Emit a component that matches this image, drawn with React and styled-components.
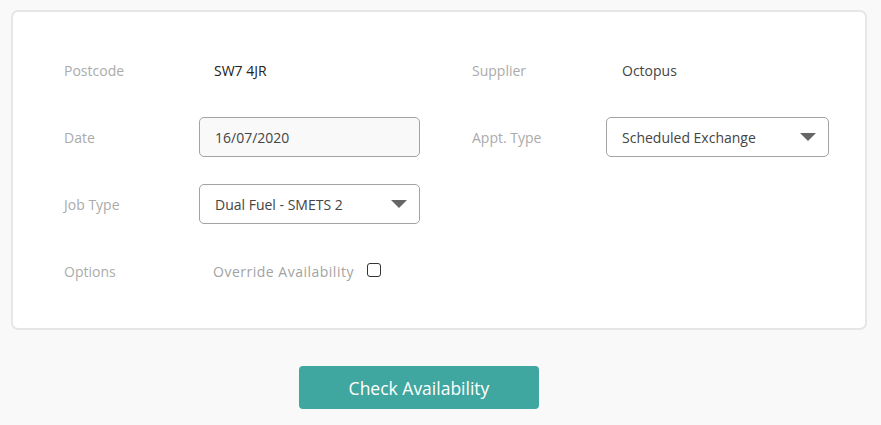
import React, { useState } from "react";
import styled, { createGlobalStyle } from "styled-components";

const GlobalStyle = createGlobalStyle`
  body {
    margin: 0;
    background: #f9f9f9;
    font-family: "Open Sans", "Liberation Sans", sans-serif;
  }
`;

const Page = styled.div`
  padding: 10px 14px 0 11px;
  display: flex;
  flex-direction: column;
  align-items: stretch;
`;

const Card = styled.div`
  background: #fff;
  border: 2px solid #e6e6e6;
  border-radius: 7px;
  padding: 38px 36px 37px 51px;
`;

const FormGrid = styled.div`
  display: grid;
  grid-template-columns: 135px 221px 52px 134px 223px;
  grid-auto-rows: 40px;
  row-gap: 27px;
  align-items: center;
`;

const Label = styled.div`
  font-size: 14px;
  color: #ababab;
  grid-column: ${props => props.col || "auto"};
`;

const Value = styled.div`
  font-size: 14px;
  color: ${props => props.dark ? "#222" : "#444"};
  padding-left: ${props => props.indent || 0}px;
`;

const Field = styled.div`
  height: 40px;
  box-sizing: border-box;
  border: 1px solid #a3a3a3;
  border-radius: 5px;
  background: ${props => props.muted ? "#f9f9f9" : "#fff"};
  display: flex;
  align-items: center;
  justify-content: space-between;
  padding: 0 12px 0 15px;
  font-size: 14px;
  color: #444;
`;

const Caret = styled.span`
  width: 0;
  height: 0;
  border-left: 8px solid transparent;
  border-right: 8px solid transparent;
  border-top: 8px solid #666;
`;

const OptionRow = styled.label`
  display: flex;
  align-items: center;
  gap: 13px;
  padding-left: 14px;
  font-size: 14px;
  letter-spacing: 0.5px;
  color: #a3a3a3;
  white-space: nowrap;
  cursor: pointer;
`;

const Box = styled.span`
  width: 14px;
  height: 14px;
  box-sizing: border-box;
  border: 1.5px solid #333;
  border-radius: 3px;
  background: ${props => props.checked ? "#3fa7a0" : "#fff"};
  margin-top: -3px;
`;

const Footer = styled.div`
  display: flex;
  justify-content: flex-start;
  padding: 36px 0 0 288px;
`;

const Button = styled.button`
  width: 240px;
  height: 43px;
  border: none;
  border-radius: 4px;
  background: #3fa7a0;
  color: #fff;
  font-family: inherit;
  font-size: 17.5px;
  cursor: pointer;
`;

export default function App() {
  let [override, changingOverride] = useState(false);

  return (
    <Page>
      <GlobalStyle />
      <Card>
        <FormGrid>
          <Label>Postcode</Label>
          <Value dark indent={15}>SW7 4JR</Value>
          <Label col={4}>Supplier</Label>
          <Value indent={16}>Octopus</Value>

          <Label>Date</Label>
          <Field muted>16/07/2020</Field>
          <Label col={4}>Appt. Type</Label>
          <Field>
            Scheduled Exchange
            <Caret />
          </Field>

          <Label>Job Type</Label>
          <Field>
            Dual Fuel - SMETS 2
            <Caret />
          </Field>
          <div />
          <div />
          <div />

          <Label>Options</Label>
          <OptionRow onClick={() => changingOverride(!override)}>
            Override Availability
            <Box checked={override} />
          </OptionRow>
        </FormGrid>
      </Card>
      <Footer>
        <Button>Check Availability</Button>
      </Footer>
    </Page>
  );
}
